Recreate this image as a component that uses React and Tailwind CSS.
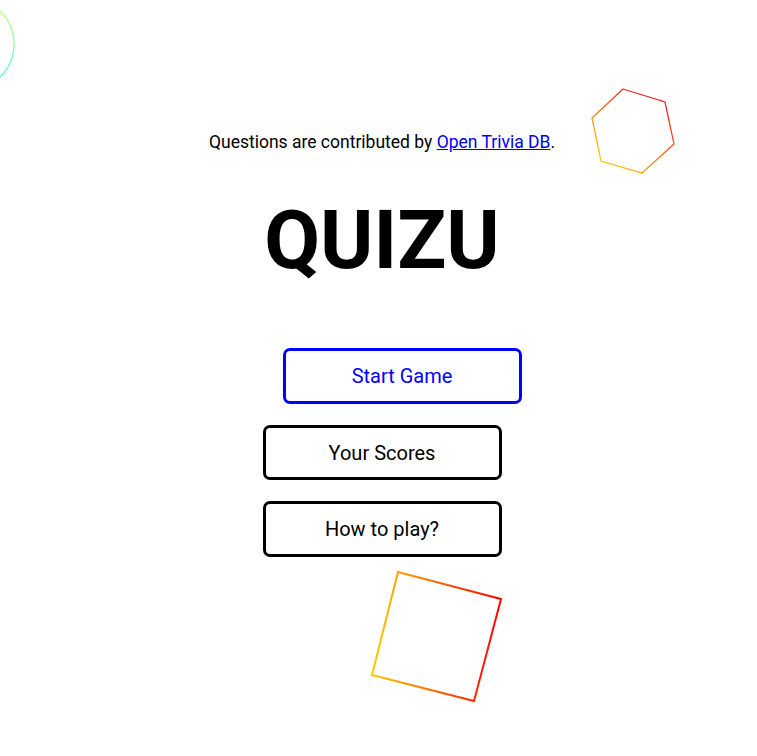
import React from 'react';

const Shapes = () => (
  <svg className="absolute inset-0 pointer-events-none" width="757" height="756" viewBox="0 0 757 756">
    <defs>
      <linearGradient id="circ" x1="0" y1="0" x2="0" y2="1">
        <stop offset="0%" stopColor="#d4ff66" />
        <stop offset="100%" stopColor="#33ffe0" />
      </linearGradient>
      <linearGradient id="hex" x1="0.8" y1="0.2" x2="0.2" y2="1">
        <stop offset="0%" stopColor="#ff1a1a" />
        <stop offset="100%" stopColor="#ffd000" />
      </linearGradient>
      <linearGradient id="sq" x1="0" y1="0" x2="1" y2="0">
        <stop offset="0%" stopColor="#ffcc00" />
        <stop offset="100%" stopColor="#ff0000" />
      </linearGradient>
    </defs>
    <circle cx="-32" cy="44" r="46" fill="none" stroke="url(#circ)" strokeWidth="1.2" />
    <polygon points="623,89 665,102 674,144 642,173 601,161 592,118" fill="none" stroke="url(#hex)" strokeWidth="1.2" />
    <polygon points="398,572 501,599 474,701 372,675" fill="none" stroke="url(#sq)" strokeWidth="2" />
  </svg>
);

export default function App() {
  return (
    <div className="relative w-full h-[756px] overflow-hidden bg-white font-['Roboto',sans-serif]">
      <Shapes />
      <div className="relative flex flex-col items-center pl-[7px] pt-[130px]">
        <p className="text-[17.5px] leading-[24px] text-black">
          Questions are contributed by{' '}
          <a href="#" className="text-[#0000ee] underline">Open Trivia DB</a>.
        </p>
        <h1 className="mt-[46px] text-[81px] leading-none font-bold text-black">QUIZU</h1>
        <div className="mt-[67px] flex flex-col items-center gap-[21px]">
          <button className="translate-x-[20px] w-[239px] h-[56px] rounded-[7px] border-[3px] border-[#0000ff] text-[20px] text-[#0000ff] bg-white">
            Start Game
          </button>
          <button className="w-[239px] h-[55px] rounded-[7px] border-[3px] border-black text-[20px] text-black bg-white">
            Your Scores
          </button>
          <button className="w-[239px] h-[56px] rounded-[7px] border-[3px] border-black text-[20px] text-black bg-white">
            How to play?
          </button>
        </div>
      </div>
    </div>
  );
}
